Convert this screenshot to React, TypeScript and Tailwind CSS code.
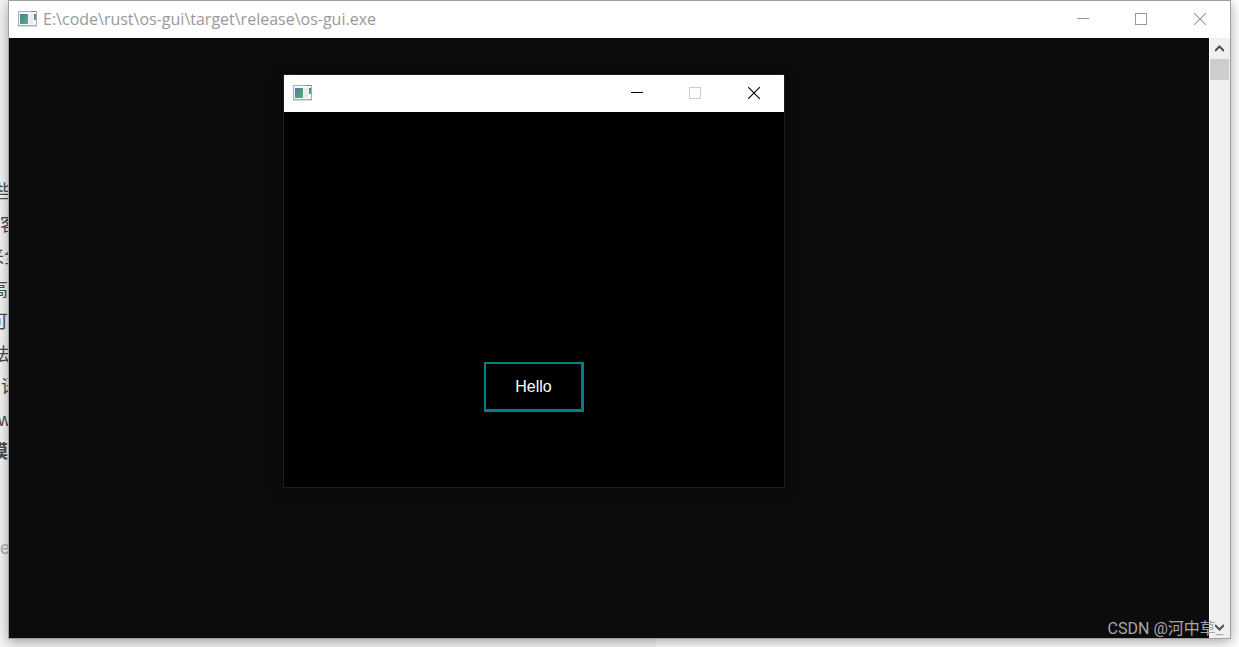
import React from 'react'

const articleLines = [
    { text: "些", style: "-ml-[6px]" },
    { text: "客", style: "ml-0" },
    { text: "来全", style: "-ml-[14px]" },
    { text: "高", style: "-ml-[10px]" },
    { text: "可", style: "-ml-[10px]" },
    { text: "法", style: "-ml-[8px]" },
    { text: "语", style: "ml-[1px]" },
    { text: "w", style: "-ml-[2px]" },
    { text: "模", style: "-ml-[10px] font-bold" },
]

function AppIcon () {
    return (
        <svg width="19" height="16" viewBox="0 0 19 16" shapeRendering="crispEdges" className="shrink-0">
            <defs>
                <linearGradient id="pane" x1="0" y1="0" x2="1" y2="1">
                    <stop offset="0" stopColor="#4679a8" />
                    <stop offset="1" stopColor="#58b368" />
                </linearGradient>
            </defs>
            <rect x="0" y="0" width="19" height="15" fill="#a5adb5" />
            <rect x="0" y="15" width="19" height="1" fill="#d8dbde" />
            <rect x="13" y="0" width="5" height="1" fill="#7d8b98" />
            <rect x="1" y="1" width="17" height="13" fill="#f6f7f8" />
            <rect x="2" y="3" width="8" height="10" fill="url(#pane)" />
            <rect x="11" y="3" width="4" height="10" fill="#ececef" />
            <rect x="16" y="3" width="2" height="6" fill="url(#pane)" />
        </svg>
    )
}

type CaptionProps = { color: string, maximizeColor: string }

function CaptionButtons ({ color, maximizeColor }: CaptionProps) {
    return (
        <div className="flex h-full">
            <button aria-label="Minimize" className={`flex w-[58px] items-center justify-center ${color}`}>
                <svg width="12" height="12" viewBox="0 0 12 12" fill="none" stroke="currentColor" shapeRendering="crispEdges"><path d="M0 5.5H12" /></svg>
            </button>
            <button aria-label="Maximize" className={`flex w-[58px] items-center justify-center ${maximizeColor}`}>
                <svg width="12" height="12" viewBox="0 0 12 12" fill="none" stroke="currentColor" shapeRendering="crispEdges"><path d="M.5 .5H11.5V11.5H.5Z" /></svg>
            </button>
            <button aria-label="Close" className={`flex w-[60px] items-center justify-center ${color}`}>
                <svg width="12" height="12" viewBox="0 0 12 12" fill="none" stroke="currentColor" strokeWidth="1.1"><path d="M0 0L12 12M12 0L0 12" /></svg>
            </button>
        </div>
    )
}

function GuiWindow () {
    return (
        <section className="absolute left-[274px] top-9 w-[502px] border border-[#1d1d1d] bg-black shadow-[0_2px_12px_rgba(0,0,0,0.6)]">
            <header className="flex h-[37px] items-center justify-between bg-white pb-px pl-[9px]">
                <AppIcon />
                <CaptionButtons color="text-black" maximizeColor="text-[#cccccc]" />
            </header>
            <div className="flex h-[375px] justify-center pt-[250px]">
                <button className="h-[50px] w-[100px] border-2 border-r-[3px] border-b-[3px] border-[#008080] text-base text-white">Hello</button>
            </div>
        </section>
    )
}

function ScrollBar () {
    return (
        <div className="flex w-[21px] flex-col justify-between border-l border-white bg-[#f0f0f0] text-[#505050]">
            <div className="w-[19px]">
                <button aria-label="Scroll up" className="flex h-[21px] w-full items-center justify-center">
                    <svg width="9" height="7" viewBox="0 0 9 7" fill="none" stroke="currentColor" strokeWidth="2"><path d="M0 6L4.5 1.5L9 6" /></svg>
                </button>
                <div className="h-[21px] bg-[#cdcdcd]"></div>
            </div>
            <button aria-label="Scroll down" className="flex h-[21px] w-[19px] items-center justify-center">
                <svg width="9" height="7" viewBox="0 0 9 7" fill="none" stroke="currentColor" strokeWidth="2"><path d="M0 1L4.5 5.5L9 1" /></svg>
            </button>
        </div>
    )
}

export default function App () {
    return (
        <div className="relative flex h-screen overflow-hidden bg-white font-['Liberation_Sans','Noto_Sans_CJK_SC',sans-serif]">
            <div className="w-[656px] bg-[#f5f5f5] pt-44 text-lg text-[#4d4d4d]">
                <div className="flex h-[292px] flex-col justify-between">
                    {articleLines.map(line => <p key={line.text} className={`leading-8 whitespace-nowrap ${line.style}`}>{line.text}</p>)}
                </div>
                <p className="mt-16 leading-8 text-[#b0b0b0]">e</p>
            </div>

            <main className="absolute top-0 right-2 bottom-2 left-2 flex flex-col border border-[#a0a0a0] bg-white shadow-[0_3px_12px_rgba(0,0,0,0.35)]">
                <header className="flex h-[37px] shrink-0 items-center justify-between pb-px pl-[9px]">
                    <div className="flex items-center gap-[6px]">
                        <AppIcon />
                        <h1 className="font-['Open_Sans',sans-serif] text-base text-[#999999]">E:\code\rust\os-gui\target\release\os-gui.exe</h1>
                    </div>
                    <CaptionButtons color="text-[#999999]" maximizeColor="text-[#999999]" />
                </header>
                <div className="relative flex flex-1">
                    <div className="flex-1 bg-[#0c0c0c]"></div>
                    <ScrollBar />
                    <GuiWindow />
                </div>
            </main>

            <p className="absolute right-[16px] bottom-[6px] font-['Roboto','Noto_Sans_CJK_SC',sans-serif] text-base leading-6 text-[#a8a8a8]">CSDN @河中草_</p>
        </div>
    )
}
